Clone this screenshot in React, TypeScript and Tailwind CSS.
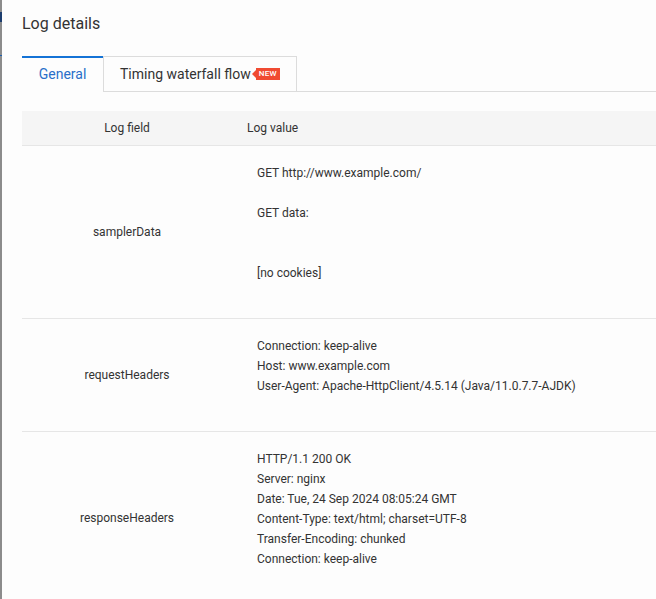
const font = { fontFamily: 'Roboto, "Liberation Sans", sans-serif' }

const rows = [
  {
    field: 'samplerData',
    value: 'GET http://www.example.com/\n\nGET data:\n\n\n[no cookies]',
  },
  {
    field: 'requestHeaders',
    value:
      'Connection: keep-alive\nHost: www.example.com\nUser-Agent: Apache-HttpClient/4.5.14 (Java/11.0.7.7-AJDK)',
  },
  {
    field: 'responseHeaders',
    value:
      'HTTP/1.1 200 OK\nServer: nginx\nDate: Tue, 24 Sep 2024 08:05:24 GMT\nContent-Type: text/html; charset=UTF-8\nTransfer-Encoding: chunked\nConnection: keep-alive',
  },
]

function NewBadge() {
  return (
    <span className="relative ml-[5px] inline-flex h-[12px] items-center bg-[#f04b32] pl-[3px] pr-[3px] text-[8px] leading-none font-medium tracking-[0.3px] text-white">
      <span className="absolute left-[-4px] top-[2px] h-0 w-0 border-y-[4px] border-r-[4px] border-y-transparent border-r-[#f04b32]" />
      NEW
    </span>
  )
}

export default function App() {
  return (
    <div className="flex h-[599px] w-[656px] overflow-hidden bg-white" style={font}>
      <div className="relative w-[2px] shrink-0 bg-[#8c8c8c]">
        <div className="absolute left-0 top-[12px] h-[10px] w-[2px] bg-[#1c3d6e]" />
        <div className="absolute left-0 top-[55px] h-[1px] w-[2px] bg-[#1c5fb0]" />
      </div>
      <div className="flex-1 bg-[#fdfdfd] pl-[20px]">
        <h2 className="pt-[14px] text-[16px] leading-[20px] text-[#333]">Log details</h2>

        <div className="mt-[22px] flex h-[36px] border-b border-[#dcdcdc]">
          <div className="relative -mb-px flex w-[81px] items-center justify-center border-t-2 border-[#1473d6] bg-[#fdfdfd] pb-[1px] text-[14px] text-[#2a6fc9]">
            General
          </div>
          <div className="-mb-px flex w-[194px] items-center border border-[#dcdcdc] pl-[16px] text-[14px] text-[#333]">
            Timing waterfall flow
            <NewBadge />
          </div>
        </div>

        <div className="mt-[19px]">
          <div className="flex h-[35px] items-center border-b border-[#e6e6e6] bg-[#f5f5f5] text-[12px] text-[#333]">
            <div className="w-[210px] text-center">Log field</div>
            <div className="pl-[15px]">Log value</div>
          </div>
          {rows.map((r) => (
            <div key={r.field} className="flex border-b border-[#e6e6e6] text-[12px] text-[#333]">
              <div className="flex w-[210px] shrink-0 items-center justify-center">{r.field}</div>
              <pre
                className="m-0 pt-[17px] pb-[35px] pl-[25px] text-[12px] leading-[20px] whitespace-pre text-[#333]"
                style={font}
              >
                {r.value}
              </pre>
            </div>
          ))}
        </div>
      </div>
    </div>
  )
}
